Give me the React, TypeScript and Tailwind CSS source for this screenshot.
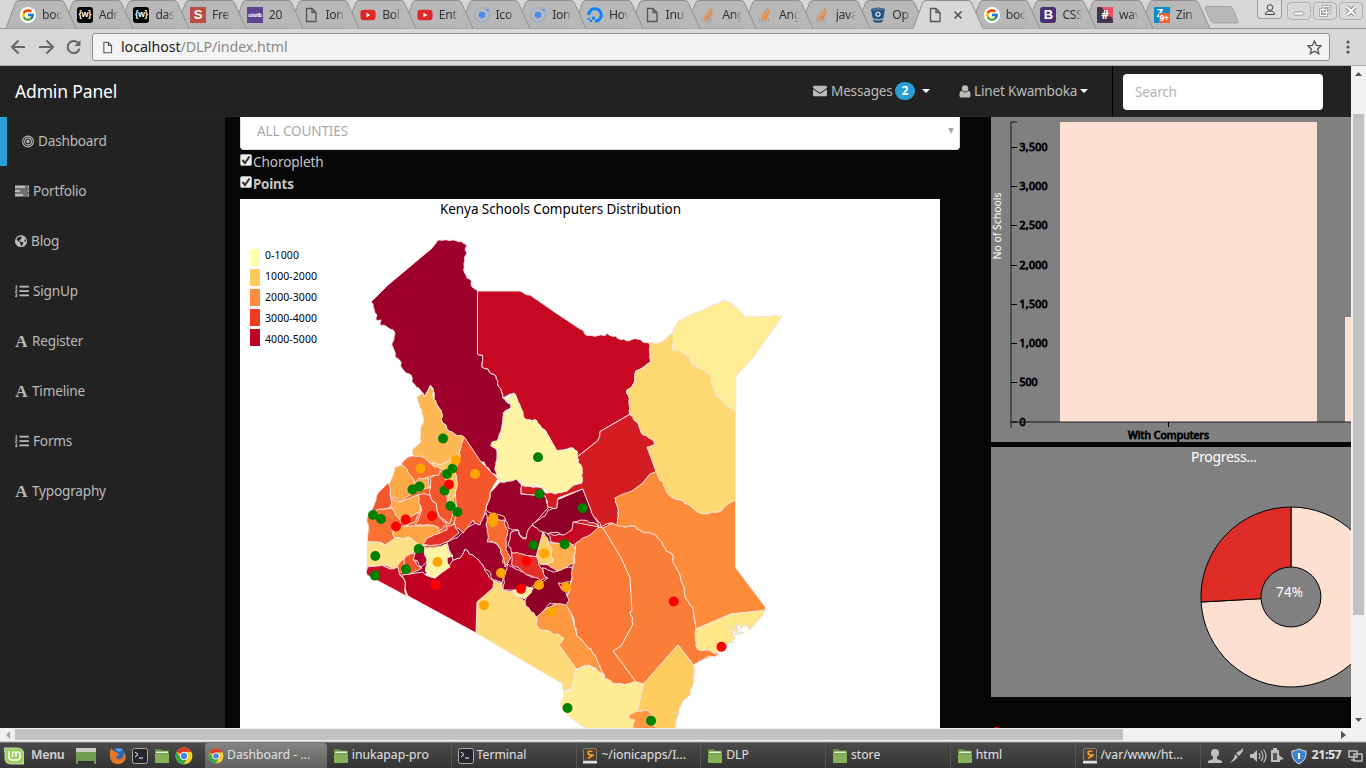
import React from "react";
import { FaGlobeAmericas, FaListOl, FaEnvelope, FaYoutube, FaDigitalOcean } from "react-icons/fa";
import { FcGoogle } from "react-icons/fc";

/* ---------- browser chrome ---------- */

const tabs: [string, string][] = [
  ["google", "boo"], ["w", "Adr"], ["w", "das"], ["s", "Fre"], ["colorlib", "20"], ["page", "Ion"],
  ["youtube", "Bol"], ["youtube", "Ent"], ["ionic", "Ico"], ["ionic", "Ion"], ["ocean", "Hov"], ["page", "Inu"],
  ["stack", "Ang"], ["stack", "Ang"], ["stack", "java"], ["bit", "Op"], ["active", ""], ["google", "boo"],
  ["boot", "CSS"], ["hash", "wav"], ["zim", "Zin"],
];

function PageIcon({ className = "h-4 w-4" }: { className?: string }) {
  return (
    <svg viewBox="0 0 16 16" className={className} fill="none" stroke="#555" strokeWidth="1.3">
      <path d="M3.5 1.5h5.5l4 4v9h-9.500z M9 1.500v4h4" />
    </svg>
  );
}

function Favicon({ kind }: { kind: string }) {
  switch (kind) {
    case "google":
      return <span className="flex h-4 w-4 items-center justify-center rounded-full bg-white"><FcGoogle className="h-3.5 w-3.5" /></span>;
    case "w":
      return <span className="flex h-4 w-4 items-center justify-center rounded-[3px] bg-black font-['Liberation_Sans'] text-[9px] font-bold tracking-[-0.5px] text-white">{"{w}"}</span>;
    case "s":
      return <span className="flex h-4 w-4 items-center justify-center bg-[#bb4c44] font-['Liberation_Sans'] text-[13px] font-bold text-white">S</span>;
    case "colorlib":
      return <span className="flex h-4 w-4 items-center justify-center bg-[#5d4592] text-[4.5px] font-bold tracking-[-0.4px] text-white">colorlib</span>;
    case "youtube":
      return <FaYoutube className="h-4.5 w-4 bg-[linear-gradient(#fff,#fff)] bg-size-[6px_6px] bg-center bg-no-repeat text-[#df2826]" />;
    case "ionic":
      return (
        <svg viewBox="0 0 16 16" className="h-4 w-4">
          <circle cx="8" cy="8" r="7.300" fill="none" stroke="#86a8df" strokeWidth=".9" />
          <circle cx="8" cy="8" r="3.300" fill="#4b8bf5" />
          <circle cx="13.800" cy="3" r="1.200" fill="#4b8bf5" />
        </svg>
      );
    case "ocean":
      return <FaDigitalOcean className="h-4 w-4 text-[#0b82ff]" />;
    case "stack":
      return (
        <svg viewBox="0 0 16 16" className="h-4 w-4" fill="none">
          <path d="M2.500 11v4h9v-4" stroke="#a4a6a9" strokeWidth="1.200" />
          <path d="M4 13h6M4 11l6 .4M4.400 8.600l5.800 1.600M5.500 6l5.200 3M7.500 3.400l4 4.600M10.300 1.300l2 5.700" stroke="#ee8130" strokeWidth="1.200" />
        </svg>
      );
    case "bit":
      return (
        <svg viewBox="0 0 16 16" className="h-4 w-4">
          <path d="M1 2Q8-1 15 2l-1.600 9Q8 13.500 2.600 11z M3 12.500q5 2 10 0l-.6 2.500q-4.400 1.600-8.800 0z" fill="#245186" />
          <circle cx="8" cy="7.200" r="2" fill="none" stroke="#ddd" strokeWidth="1.300" />
          <path d="M3 2.500q5-1.300 10 0" stroke="#aaa" fill="none" strokeWidth=".6" />
        </svg>
      );
    case "boot":
      return <span className="flex h-4 w-4 items-center justify-center rounded-[3px] bg-[#4b2f76] font-['Liberation_Sans'] text-[13px] font-bold text-white">B</span>;
    case "hash":
      return <span className="flex h-4 w-4 items-center justify-center bg-[linear-gradient(45deg,#43354a_62%,#ef5064_63%)] text-[12px] font-bold text-white">#</span>;
    case "zim":
      return (
        <span className="relative flex h-4 w-4 bg-[#0c8acb] pl-[3px] text-[11px] leading-[11px] font-bold text-white">
          Z
          <span className="absolute top-[6px] left-[5px] h-[10px] w-[11px] rounded-[1px] bg-[#f0652b] text-center text-[8px] leading-[10px]">9+</span>
        </span>
      );
    default:
      return <PageIcon />;
  }
}

function Tab({ kind, label, index }: { kind: string; label: string; index: number }) {
  const active = kind === "active";
  return (
    <div className="relative h-7 w-[56.700px] shrink-0" style={{ zIndex: active ? 40 : 30 - index }}>
      <svg className="absolute top-0 left-0 h-[29px] w-[72px]" viewBox="0 0 72 29">
        <path d="M0 28.500L9.500 3Q10.500.5 13 .5H55Q57.500.5 58.500 3L70 28.500" fill={active ? "#d7d7d7" : "#b8b8b8"} stroke="#8f8f8f" />
        {active && <path d="M1 28.500H69.500" stroke="#d7d7d7" strokeWidth="2" />}
      </svg>
      <div className="relative flex h-full items-center gap-[6px] pt-[2px] pl-[14px]">
        <Favicon kind={kind} />
        {active ? (
          <svg viewBox="0 0 10 10" className="ml-[4px] h-[10px] w-[10px] shrink-0" stroke="#555" strokeWidth="1.700"><path d="M1.500 1.500l7 7M8.500 1.500l-7 7" /></svg>
        ) : (
          <span className="w-[20px] shrink-0 overflow-hidden mask-r-from-60% text-[12.2px] tracking-[-0.3px] whitespace-nowrap text-[#333]">{label}</span>
        )}
      </div>
    </div>
  );
}

function WindowButton({ children, className }: { children: React.ReactNode; className: string }) {
  return (
    <div className={className}>
      <svg viewBox="0 0 14 14" className="h-[14px] w-[14px]" fill="none">{children}</svg>
    </div>
  );
}

function Chrome() {
  return (
    <header className="h-[66px] shrink-0 border-b border-[#adadad] bg-[#d7d7d7]">
      <div className="relative flex h-7 pl-[6px]">
        {tabs.map(([k, l], i) => <Tab key={i} kind={k} label={l} index={i} />)}
        <svg className="mt-[6px] ml-[8px] h-[18px] w-[35px] shrink-0" viewBox="0 0 35 18">
          <path d="M3 .5H26Q28 .5 29 3L34 15Q34.500 17 32 17H10Q8 17 7 15L1 3Q.5.500 3 .5z" fill="#b8b8b8" stroke="#a5a5a5" />
        </svg>
        <div className="absolute top-0 right-[3px] flex gap-[2px]">
          <WindowButton className="mr-[3px] flex h-[19px] w-[25px] justify-center rounded-b border border-t-0 border-[#999] bg-[#dedede] pt-[3px]">
            <circle cx="7" cy="4.500" r="2.800" stroke="#444" /><path d="M2.500 11.500q0-3.500 4.500-3.500t4.500 3.500z" stroke="#444" />
          </WindowButton>
          <WindowButton className="mt-[2px] flex h-[18px] w-6 items-center justify-center rounded border border-[#b0b0b0] bg-[#d9d9d9]">
            <rect x="2" y="8" width="10" height="3" rx="1" fill="#fff" stroke="#999" />
          </WindowButton>
          <WindowButton className="mt-[2px] flex h-[18px] w-6 items-center justify-center rounded border border-[#b0b0b0] bg-[#d9d9d9]">
            <path d="M5 2.500h7v6H5z M2.500 5.500h6v6h-6z" stroke="#999" strokeWidth="2.500" /><path d="M5 2.500h7v6H5z M2.500 5.500h6v6h-6z" stroke="#fff" />
          </WindowButton>
          <WindowButton className="mt-[2px] flex h-[18px] w-6 items-center justify-center rounded border border-[#b0b0b0] bg-[#d9d9d9]">
            <path d="M3 3l8 8M11 3l-8 8" stroke="#888" strokeWidth="4" /><path d="M3 3l8 8M11 3l-8 8" stroke="#fff" strokeWidth="2.200" />
          </WindowButton>
        </div>
      </div>
      <div className="flex h-[37px] items-center border-t border-[#8f8f8f] pl-[11px]">
        <svg className="h-4 w-[72px]" viewBox="0 0 72 16" fill="none" stroke="#666" strokeWidth="2">
          <path d="M14 8H2M7.500 1.500L1 8l6.500 6.500" />
          <path d="M28 8h12M35.500 1.500L42 8l-6.500 6.500" />
          <path d="M67.500 4.500A6 6 0 1 0 68.500 9.500" /><path d="M69.500 1v6h-6z" fill="#666" stroke="none" />
        </svg>
        <div className="ml-[9px] flex h-7 w-[1238px] items-center rounded-[3px] border border-[#8f8f8f] bg-[#f3f3f3] pl-2">
          <PageIcon className="h-[13px] w-[13px]" />
          <span className="ml-[7px] w-[1186px] text-[14.2px] tracking-[-0.05px] text-[#8a8a8a]"><span className="text-[#222]">localhost</span>/DLP/index.html</span>
          <svg viewBox="0 0 16 16" className="h-[15px] w-[15px] shrink-0" fill="none" stroke="#555" strokeWidth="1.400"><path d="M8 1l2.100 4.800 5 .4-3.800 3.400 1.200 5L8 11.900l-4.500 2.700 1.200-5L.9 6.200l5-.4z" /></svg>
        </div>
        <svg viewBox="0 0 4 14" className="ml-[16px] h-[14px] w-1" fill="#555"><circle cx="2" cy="2" r="1.600" /><circle cx="2" cy="7" r="1.600" /><circle cx="2" cy="12" r="1.600" /></svg>
      </div>
    </header>
  );
}

/* ---------- sidebar ---------- */

const Bullseye = () => (
  <svg viewBox="0 0 12 12" className="h-[13px] w-3" fill="none" stroke="currentColor" strokeWidth="1.100">
    <circle cx="6" cy="6" r="5.400" /><circle cx="6" cy="6" r="3.400" /><circle cx="6" cy="6" r="1.700" fill="currentColor" stroke="none" />
  </svg>
);
const Tasks = () => (
  <svg viewBox="0 0 14 12" className="h-3 w-[14px]" fill="currentColor">
    <path d="M0 .5h14v3H0zM0 4.500h14v3H0zM0 8.500h14v3H0z" /><path d="M10 1.500h3v1h-3zM5 5.500h8v1H5zM8 9.500h5v1H8z" fill="#222" />
  </svg>
);
const LetterA = () => <span aria-hidden className="w-[13px] text-center font-['Liberation_Serif',serif] text-[17px] leading-none font-bold">A</span>;
const Globe = () => <FaGlobeAmericas className="h-[12.500px] w-[12px]" />;
const List = () => <FaListOl className="h-[14px] w-[14px]" />;

const nav: [React.FC, string][] = [
  [Bullseye, "Dashboard"], [Tasks, "Portfolio"], [Globe, "Blog"], [List, "SignUp"],
  [LetterA, "Register"], [LetterA, "Timeline"], [List, "Forms"], [LetterA, "Typography"],
];

function Sidebar() {
  return (
    <aside className="w-[225px] shrink-0 bg-[#222]">
      {nav.map(([Icon, label], i) => (
        <div key={label} className={i === 0 ? "flex h-[50px] items-center gap-1 border-l-[7px] border-[#2a9fd6] pl-[15px] text-[#bbb]" : "flex h-[50px] items-center gap-1 pl-[15px] text-[#bbb]"}>
          <Icon /><span className="text-[13.6px] tracking-[-0.2px]">{label}</span>
        </div>
      ))}
    </aside>
  );
}

/* ---------- county map ---------- */

const ground: [string, string][] = [
  ["#f4652e", "403,465 430,462 460,460 455,520 447,545 425,550 420,570 402,575 368,570 368,520 379,494 390,483"],
  ["#9b002b", "447,535 480,505 500,482 520,485 548,500 598,527 575,545 571,580 564,605 538,615 523,600 495,590 440,570 400,580 404,566 425,560"],
  ["#fa7a35", "640,640 697,625 720,652 694,664 680,650"],
  ["#d41d22", "585,500 620,515 622,530 575,545 560,520"],
];

const counties: [string, string][] = [
  ["#9e002c", "438,240 454,240 459,242 461,241 467,245 465,250 467,253 464.7,257 464.7,273 471.500,281 471,284 477.500,290.500 477.500,354 482.500,355 482,367 488,369 496,376 498,386 502,393 503,398 511,404 511,408 505,411 502,426 501,440 491,445 497,450 497,476 484,462 480,462 464.500,438 448,430 442.500,423 439,408 434,399 433,388 430,386 427,392 424,397 421,391 416,387 412,382 411,375 406,373 402.500,369 400.500,361 395,357 394,350 391.500,344 394,339 394,331 387,327 380,325 381,320 376,320 377,315 374,309 373,304 371,302 388,285 431,249"],
  ["#c60822", "477.500,291 520,291 530,295 556,313 580,329 586,335 606,335 607,333 609,335 616,336 619,339 627,341 637,339 643,342 648.500,342.500 650.500,362 643,367.500 636,371 635,379 632,387 626.500,390.500 629,402 629.500,414.500 600,431.500 597.500,441 577,457 573,448 557,451 545,430 536,420 524,418 518,402 514,393 510,394 503,398 502,393 498,386 496,376 488,369 482,367 482.500,355 477.500,354"],
  ["#fed872", "648.500,342.500 662,342 672.500,332.500 673,350 687,355 699,369 710,374 712,385 716,395 723,402 735.500,410 735.500,500 725,506 721,511 713,512 707,514 700,513 695,510 685,504 673,498 665,488 656,471.500 647,447 655,444.500 647,436 643,435 639,427 631.500,418 629,411 629,402 626.500,390.500 632,387 635,379 636,371 643,367.500 650.500,362"],
  ["#ffed96", "672.500,332.500 678,321 695,313 725,300 729,302 734,307 740,311 745,317 755,317 775,315 782.500,316 753,358 736,376 736,410 729,406 723,402 716,395 712,385 710,374 699,369 687,355 673,350"],
  ["#d41d22", "629.500,414.500 639,427 643,435 647,436 655,444.500 647,447 656,471.500 650,474 642,484 632,491 622,497 615,498 618,513 618,527 610,523 601,527 593,517 582.700,489 558,498 556.700,509 548,507 545,496 520.700,494 521.700,485 538,487 546,493 567,491 573,485 582,483 582,468 578,463 577,457 597.500,441 600,431.500"],
  ["#fff4a3", "514,393 518,402 523,412 524,418 536,420 545,430 557,451 566,450 573,448 577,451 577,457 578,463 582,468 582,482 575,484 567,491 555,494 547,493 541,486 530,486 522,484 517,480 500,482 497,478 496,462 497,450 491,446 492,442 497,441 502,427 503,413 511,408 511,404 506.700,400"],
  ["#fc8b3a", "656,471.500 665,488 673,498 685,504 695,510 700,513 707,514 713,512 721,511 725,506 735.500,500 735.500,567.500 766,608 764,611 731,614 696,629 692.500,607 687,600 684,587 677,570 673,555 666,551 660,540 650,533 641,531 635,526 618,527 618,513 615,498 632,491 642,484 650,474"],
  ["#fa7e38", "603,528 610,524 618,526 635,526 641,531 650,533 660,540 666,551 673,555 677,570 684,587 687,600 692.500,607 696,629 697.500,649 708,650 720,654 715,657 708,656 700,661 693.500,665 678,645 643.500,684 636,682 613,651 621,646 633,624 630,612 630,578 621,558"],
  ["#fa7a35", "603,528 597,527 588,535 580,539 576,543 575,560 571,575 570,590 565,606 571,613 574,625 577,636 586,645 595,655 601,670 605,679 622,684 636,682 613,651 621,646 633,624 630,612 632,611 630,578 621,558"],
  ["#fecc5c", "678,645 693.500,665 694,680 690,695 683,701 679,711 677,718 674,730 655,730 650,720 649,711 637,711 643.500,684"],
  ["#ffe688", "696,629 731,614 766,610 757,622 750,630 745,625 741,629 738,624 738,632 730,627 736,638 732,641 722,650 718,653 708,650 697.500,649"],
  ["#ffeb92", "576,670 589,664 597,670 605,679 622,684 636,682 643.500,684 637,713 633,730 588,730 568,716 560,706 564,697 564,691 572,690 574,676"],
  ["#fd9840", "637,711 649,711 651,718 658,730 632,730 635,720 629,718 629,715"],
  ["#fddb78", "493,579 502,583 502.700,590 510,592 520,596 523,600 528,608 536.700,617 536,625 551.700,633 564,638 559,645 576,668 571.700,689 564,691 562.700,684 476,633 477,602"],
  ["#c00023", "402,575 405,581 408,596 476,633 477,602 493,588 493,580 483,563 475,557 465,549 460,558 453,560 448,567 435,578 423,572"],
  ["#9e002c", "486,512.700 488,530 490,542 498,545 502,555 503,563 509,565 503,577 502,583 493,580 490,572 483,565 475,557 465,549 460,558 453,560 446.700,542 457,538 467,528 480,522"],
  ["#9b002b", "500,482 516.700,479 521.700,485 520.700,494 545,496 548,508 540,517 528,530 526.700,538 520,535 518,530 508,528 505,518 495,515 486,510 490,493"],
  ["#f4572b", "464.300,437 481,462 498,479 490,493 485,512 480,525 473,520 468,527 463,533 453,527 457,515 455,490 455,473 459,460 459,447"],
  ["#fdb853", "430.700,385 434,399 439,408 442.500,423 448,430 464,437 460,450 457,456 440,465 425,460 415,458 412,450 421,442 423,423 421.700,410 417,397 423,393 425,397 428,391"],
  ["#fec95c", "456,456 460,450 459,460 455,473 456,490 453,500 457,515 450,510 448,500 448,487 446,472 432,463 440,465"],
  ["#f4562b", "430,478 441,471 447,483 447,497 453,510 449,524 438,513 430,495"],
  ["#fb6f31", "401.700,463 408,457 425,458 440,468 439,475 428,477 415,483 408,473"],
  ["#fea848", "401.700,465 408,473 415,483 419,478 428,478 430,488 420,490 410,495 400,502 390.700,498 390.700,480 395,467"],
  ["#f4572b", "388,483 391,498 391,507 380,510 368,517 366.700,523 376,500 378,493"],
  ["#fea848", "391,499 400,502 420,494 420,512 403,520 395,515 391,507"],
  ["#fb7131", "367,517 377,510 391,508 395,515 402,521 392,530 395,538 385,545 378,542 368,542 369,530"],
  ["#f4522a", "418,495 430,495 438,513 447,523 441,530 433,525 415,525 421.700,510"],
  ["#f4522a", "403,520 420,512 415,522 405,526 393,530"],
  ["#fea343", "393,530 405,526 433,525.700 440,532 427,545 419,547 413,541 408,537 395,538"],
  ["#e23126", "440,533 447,530 446,526 455,524 459,533 447,542 435,545 423,545 427,538"],
  ["#a80028", "419,547 423,545 427,562 421,567 412,558"],
  ["#fee187", "367,542 377,542 385,545 395,538 408,537 419,545 413,552 400,562 395,569 390,567 382,565 367,567"],
  ["#c70d25", "367,567 382,565 390,569 398,567 402,577 408,597 367,575"],
  ["#f4522a", "405,557 415,553 413,560 422,568 410,574 401,572 404,565"],
  ["#fff4a3", "425,548 435,548 447,544 453,556 447,558 450,567 435,578 426,572 427,562"],
  ["#fb6a30", "488,518 494,513 499,520 505,520 508,530 506,545 510.700,558 505,567 502,555 498,545 487,542 486,525"],
  ["#a80028", "511,532 518,530 521,537 526,539 528,530 532,525 543,532 541,543 537,557 511.700,553 508,545"],
  ["#c60822", "547,533 563,535 573,522 599,527 590,535 583,538 573,545 562,545 551,542"],
  ["#8f0026", "582.700,489 557,500 557,508 548,510 545,516 532,524 543,532 563,535 572,530 573,522 581,520 599,527 591,510"],
  ["#feae4c", "544,535 552,543 562,545 569,542 575,547 575,563 567,566 565,571 553,568 543,564 553,561"],
  ["#fecf68", "543,532 552,549 552.700,562 540,564 536,557"],
  ["#e62f26", "511.700,553 529,557 536.700,557 540,567 548,577 540,581 523,572 511.700,565"],
  ["#a00028", "508,564 523,572 540,580 536,584 526.700,590 503,590 504,577"],
  ["#8f0026", "541.700,568 553,572 565,568 571.700,567 571,582 558,583 565,591 569,600 565,607 550,603 543,612 536.700,617 525,601 531,590 548,578"],
  ["#fff0a0", "510,592 519,588 533,588 531,593 524,599"],
  ["#fd9840", "536.700,617 547,608 555,604 567,606.700 571,613 577,636 586,645 595,655 605,679 597,670 589,665 576.700,669 559,645 564,638 551.700,633 536,625"],
];

const points: [string, string][] = [
  ["green", "443,438.5 538,457.3 452.5,468.5 447,474 419.5,486.5 412.5,489.5 444.5,490.5 450.5,506 457.5,512 373,515 381,519 539.5,494 582.7,508.3 533.5,545.3 564.7,544.3 375.3,556 418.7,549 406,569.3 375,575.6 567.5,708 651,720.7"],
  ["orange", "456,460 420.5,468.5 475,474 493.3,517.5 493,522 544.3,553.5 437.5,562 501,573 539,585 566,587.3 484,605.3 551.7,612"],
  ["red", "449,484.5 432,516 405.7,519.5 396,526.5 526.5,561 435.3,584.7 521,589 673.7,601.5 721.5,646.7"],
];

/* Splits an edge at its midpoint, again and again, with a small offset that
   depends only on the edge itself, so neighbouring counties share a border. */
function split(x: number, y: number, u: number, v: number, out: string[]) {
  const len = Math.hypot(u - x, v - y);
  if (len <= 4 || len >= 21) return;
  const h = Math.sin((x + u) * 12.9 + (y + v) * 7.3) * Math.min(1.3, len * 0.11);
  const mx = (x + u) / 2 + h;
  const my = (y + v) / 2 - h;
  split(x, y, mx, my, out);
  out.push(mx.toFixed(1) + "," + my.toFixed(1));
  split(mx, my, u, v, out);
}

function roughen(src: string): string {
  const p = src.split(" ").map((s) => s.split(",").map(Number));
  const out: string[] = [];
  p.forEach(([x, y], i) => {
    const [u, v] = p[(i + 1) % p.length];
    out.push(x + "," + y);
    split(x, y, u, v, out);
  });
  return out.join(" ");
}

const legend: [string, string][] = [
  ["#ffffb2", "0-1000"], ["#fecc5c", "1000-2000"], ["#fd8d3c", "2000-3000"], ["#f03b20", "3000-4000"], ["#bd0026", "4000-5000"],
];

function CountyMap() {
  return (
    <svg viewBox="240 199 700 529" className="block h-[529px] w-[700px] bg-white">
      <text x="440" y="214" fontSize="13.500" textLength="241" fill="#000">Kenya Schools Computers Distribution</text>
      {legend.map(([c, label], i) => (
        <g key={label}>
          <rect x="250" y={249 + i * 20} width="10" height="17" fill={c} />
          <text x="265" y={259 + i * 21} fontSize="10.500" textLength={i ? 52 : 34}>{label}</text>
        </g>
      ))}
      {ground.map(([c, pts]) => <polygon key={c} points={pts} fill={c} />)}
      <g stroke="#f3e4e2" strokeWidth="1" strokeLinejoin="round">
        {counties.map(([c, pts], i) => <polygon key={i} points={roughen(pts)} fill={c} />)}
      </g>
      <g fill="none" stroke="#e9dfcf" strokeWidth="1.300">
        <path d="M728 626l5 5-1 4 3 2M738 622l-2 6 4 2M735 635l5-3 4 1M741 627l6-2 3 4M731 643l4-2M694 665v7l-1 6 2 4M672 712l5 2M734 633l8 2" />
      </g>
      {points.map(([c, list]) => list.split(" ").map((s) => {
        const [x, y] = s.split(",");
        return <circle key={s} cx={x} cy={y} r="5" fill={c} />;
      }))}
    </svg>
  );
}

/* ---------- charts ---------- */

const ticks: [number, string][] = [
  [147.5, "3,500"], [186.5, "3,000"], [225.5, "2,500"], [265.5, "2,000"], [304.5, "1,500"], [343.5, "1,000"], [382.5, "500"], [422, "0"],
];

function BarChart() {
  return (
    <svg viewBox="991 117 360 325" className="block h-[325px] w-[360px] bg-[#808080]">
      <rect x="1060" y="122" width="257" height="300" fill="#fde0d2" />
      <rect x="1345" y="317" width="20" height="105" fill="#fde0d2" />
      <path d="M1017 122H1011V428M1011 422H1360" fill="none" stroke="#000" strokeOpacity=".55" strokeWidth="1.500" />
      <path d="M1168.500 422v5" stroke="#000" />
      <g fontSize="10.500" stroke="#000" strokeWidth=".8">
        {ticks.map(([y, t]) => (
          <g key={t}><path d={`M1011 ${y}h6`} strokeWidth="1" /><text x="1019.500" y={y + 3.800} textLength={t.length === 5 ? 28 : t.length === 3 ? 18 : 6.500}>{t}</text></g>
        ))}
        <text x="1128" y="439" textLength="81">With Computers</text>
      </g>
      <text transform="translate(1001 259.500) rotate(-90)" fontSize="10.500" textLength="67" fill="#fff">No of Schools</text>
    </svg>
  );
}

function ProgressChart() {
  return (
    <svg viewBox="991 447 360 250" className="block h-[250px] w-[360px] bg-[#808080]">
      <text x="1191" y="462" fontSize="14" textLength="66" fill="#fff">Progress...</text>
      <g stroke="#000">
        <path d="M1291 507A90 90 0 1 1 1201.100 602L1261 598.700A30 30 0 1 0 1291 567z" fill="#fde0d2" />
        <path d="M1201.100 602A90 90 0 0 1 1291 507V567A30 30 0 0 0 1261 598.700z" fill="#de2d26" />
      </g>
      <text x="1276" y="597" fontSize="13.500" textLength="27" fill="#fff">74%</text>
    </svg>
  );
}

/* ---------- page ---------- */

const Caret = () => <svg viewBox="0 0 8 4" className="h-1 w-2 shrink-0" fill="#fff"><path d="M0 0h8L4 4z" /></svg>;

function Check({ label, bold }: { label: string; bold?: boolean }) {
  return (
    <div className="flex h-[22px] items-center gap-[1px] text-[#c4c4c4]">
      <svg viewBox="0 0 12 12" className="-mt-[5px] h-3 w-3"><rect x=".5" y=".5" width="11" height="11" rx="1.500" fill="#eee" stroke="#aaa" /><path d="M2.500 6l2.500 3 4.500-6.500" fill="none" stroke="#333" strokeWidth="2" /></svg>
      <span className={bold ? "text-[13.4px] font-bold tracking-[-0.2px]" : "text-[13.6px] tracking-[-0.1px]"}>{label}</span>
    </div>
  );
}

function Page() {
  return (
    <div className="flex h-[662px] w-[1351px] flex-col bg-[#060606]">
      <nav className="z-10 flex h-[51px] shrink-0 items-center border-b border-[#282828] bg-[#222] pl-[15px] text-[13.6px] text-[#bbb]">
        <span className="w-[798px] shrink-0 text-[17.5px] tracking-[-0.15px] text-white">Admin Panel</span>
        <FaEnvelope className="h-[14px] w-[14px] shrink-0" />
        <span className="ml-[4px] w-[62px] shrink-0 tracking-[-0.2px]">Messages</span>
        <span className="ml-[2px] flex h-[18px] w-[20px] shrink-0 items-center justify-center rounded-full bg-[#2a9fd6] text-xs font-bold text-white">2</span>
        <span className="ml-[7px]"><Caret /></span>
        <svg viewBox="0 0 12 13" className="ml-[29px] h-[13px] w-3 shrink-0" fill="#bbb"><circle cx="6" cy="3.400" r="3.200" /><path d="M2.600 5.800Q0 6.500.5 11Q.7 12.500 2.500 12.500h7q1.800 0 2-1.500Q12 6.500 9.400 5.800 6 9 2.600 5.800z" /></svg>
        <span className="ml-[3px] w-[106px] shrink-0 tracking-[-0.2px] whitespace-nowrap">Linet Kwamboka</span>
        <Caret />
        <div className="ml-6 flex h-full items-center border-l border-black pt-[2px] pl-[10px]">
          <div className="flex h-9 w-[200px] items-center rounded bg-white pl-3 tracking-[-0.2px] text-[#b5b5b5]">Search</div>
        </div>
      </nav>
      <div className="-mt-px flex min-h-0 flex-1">
        <Sidebar />
        <main className="flex flex-1 overflow-hidden pt-px pl-[15px]">
          <div className="w-[751px] shrink-0">
            <div className="flex h-[33px] w-[720px] items-center justify-between rounded-b border border-t-0 border-[#ddd] bg-white pr-[5px] pb-1 pl-4 text-[13.5px] text-[#aaa]">
              <span className="tracking-[-0.1px]">ALL COUNTIES</span>
              <svg viewBox="0 0 6 6" className="h-1.5 w-1.5" fill="#aaa"><path d="M0 0h6L3 6z" /></svg>
            </div>
            <div className="mt-px mb-[4px]"><Check label="Choropleth" /><Check label="Points" bold /></div>
            <CountyMap />
          </div>
          <div className="flex w-[360px] shrink-0 flex-col gap-[5px]">
            <BarChart />
            <ProgressChart />
            <svg viewBox="0 0 12 31" className="-mt-[5px] h-[31px] w-3"><circle cx="5.500" cy="35" r="5" fill="red" /></svg>
          </div>
        </main>
      </div>
    </div>
  );
}

function VerticalBar() {
  return (
    <div className="flex h-full w-[15px] flex-col items-center bg-[#f1f1f1] pt-[6px]">
      <svg viewBox="0 0 7 4" className="h-1 w-[7px]" fill="#505050"><path d="M0 4h7L3.500 0z" /></svg>
      <div className="mt-[38px] h-[501px] w-[11px] bg-[#c1c1c1]" />
      <svg viewBox="0 0 7 4" className="mt-[103px] h-1 w-[7px]" fill="#505050"><path d="M0 0h7L3.500 4z" /></svg>
    </div>
  );
}

/* ---------- desktop panel ---------- */

const Folder = () => (
  <svg viewBox="0 0 16 16" className="h-4 w-4 shrink-0"><path d="M1 1h6l1 1.500h7V15H1z" fill="#5f8a38" /><path d="M1 5.500h14V15H1z" fill="#86b158" /><path d="M2 3.500h12v1.500H2z" fill="#e6eedc" /></svg>
);
const Terminal = () => (
  <svg viewBox="0 0 16 16" className="h-4 w-4 shrink-0"><rect x=".5" y=".5" width="15" height="15" rx="2" fill="#25252f" stroke="#aaa" /><path d="M3 4l3 2.500L3 9M7 10h4" stroke="#fff" fill="none" /></svg>
);
const Sublime = () => (
  <svg viewBox="0 0 16 16" className="h-4 w-4 shrink-0"><rect x="1.500" y=".5" width="13" height="12.500" rx="1.500" fill="#4d4037" stroke="#8a8178" /><path d="M1 13h14v2.500H1z" fill="#ddd" /><path d="M10.500 3.500Q5.500 2.500 6 5t4 2-4 3.200" stroke="#f6a030" strokeWidth="1.600" fill="none" /></svg>
);
const ChromeLogo = ({ className = "h-4 w-4 shrink-0" }: { className?: string }) => (
  <svg viewBox="0 0 16 16" className={className}>
    <circle cx="8" cy="8" r="7.500" fill="#f7cf2c" /><path d="M8 8L1.500 4.250A7.500 7.500 0 0 1 14.500 4.250L8 4.500z" fill="#df3b2c" /><path d="M1.500 4.250A7.500 7.500 0 0 0 8 15.500L11 9.500 8 11 5 9.500z" fill="#3da648" />
    <circle cx="8" cy="8" r="3.600" fill="#fff" /><circle cx="8" cy="8" r="2.800" fill="#4587e8" />
  </svg>
);

const windows: [React.FC, string][] = [
  [ChromeLogo, "Dashboard - ..."], [Folder, "inukapap-pro"], [Terminal, "Terminal"], [Sublime, "~/ionicapps/I..."],
  [Folder, "DLP"], [Folder, "store"], [Folder, "html"], [Sublime, "/var/www/ht..."],
];

function Taskbar() {
  return (
    <footer className="flex h-[26px] shrink-0 items-center border-t border-[#777] bg-linear-to-b from-[#4a4a4a] to-[#343434] pl-[4px] text-[12.2px] text-[#e2e2e2]">
      <svg viewBox="0 0 20 18" className="h-[18px] w-5 shrink-0"><path d="M0 1h13q7 0 7 7v9H7q-6 0-6-6V4H0z" fill="#9bcf5f" stroke="#e5eedc" strokeWidth=".8" /><path d="M5 4v6q0 3 3 3h5q3 0 3-3V7q0-2-2-2t-2 2v3M12 7q0-2-1.800-2T8.500 7v3" stroke="#fff" strokeWidth="1.500" fill="none" /></svg>
      <span className="ml-[7px] w-[45px] shrink-0 font-bold tracking-[-0.3px] text-[#c9c9c9]">Menu</span>
      <svg viewBox="0 0 20 16" className="h-4 w-5 shrink-0"><path d="M0 0h20v16H0z" fill="#729d50" /><path d="M0 0h20v4H0z" fill="#c9cec4" /><path d="M2 13h16v3H2z" fill="#333" /></svg>
      <svg viewBox="0 0 18 18" className="ml-[13px] h-[18px] w-[18px] shrink-0"><circle cx="9" cy="9" r="8" fill="#2869ad" /><path d="M1 5q0-3 2-4 0 3 4 4l3 2-3 3q1 3 5 2 4-2 2-7 4 4 2 8-3 5-8 4Q1 16 1 9z" fill="#e87722" /><path d="M6 2q5-2 8 1l-4 2z" fill="#5da2de" /></svg>
      <div className="ml-[5px] flex items-center gap-[6px]"><Terminal /><Folder /><ChromeLogo className="-ml-px h-[18px] w-[18px] shrink-0" /></div>
      <div className="ml-[12px] flex h-full shrink-0 gap-[2.800px]">
        {windows.map(([Icon, label], i) => (
          <div key={label} className={i === 0 ? "flex h-full w-[122px] items-center gap-[3px] rounded-t bg-linear-to-b from-[#858585] to-[#606060] pl-[3px]" : "flex h-full w-[122px] items-center gap-[3px] border-r border-[#555] bg-linear-to-b from-[#4b4b4b] to-[#333] pl-[3px]"}>
            <Icon /><span className="whitespace-nowrap">{label}</span>
          </div>
        ))}
      </div>
      <svg viewBox="0 0 100 18" className="ml-[7px] h-[18px] w-[100px] shrink-0" fill="#bebebe">
        <circle cx="7" cy="6" r="4" /><path d="M5 8h4v4l5 2v2H0v-2l5-2z" />
        <path d="M22 16l4-5 1-4 3 3-3 3zM28 6l5-3 2-2v3l-4 5z" />
        <path d="M42 7h3l4-4v12l-4-4h-3z" /><path d="M51 6q2 3 0 6M53 4q4 5 0 10M55.500 2.500q5 6.500 0 13" fill="none" stroke="#bebebe" strokeWidth="1.200" />
        <path d="M63 3h2V1h4v2h2v5l5 4-4 1v2h-9z" /><path d="M65 6h4v7h-4z" fill="#555" />
        <path d="M91 2q4 2 7 2 1 9-7 13-8-4-7-13 3 0 7-2z" fill="#3a83cf" stroke="#ddd" /><path d="M91 6v6" stroke="#fff" strokeWidth="2" />
      </svg>
      <span className="ml-[4px] w-[34px] shrink-0 text-[12.5px] font-bold tracking-[-0.5px]">21:57</span>
      <svg viewBox="0 0 15 14" className="ml-[2px] h-[14px] w-[15px] shrink-0" fill="#3c3c3c" stroke="#bebebe" strokeWidth="1.500"><path d="M6 5h8v7H6zM1 2h8v6H1zM3 11h4" /></svg>
    </footer>
  );
}

export default function App() {
  return (
    <div className="flex h-[768px] w-[1366px] flex-col overflow-hidden bg-[#d7d7d7] font-['Noto_Sans','Open_Sans',sans-serif]">
      <Chrome />
      <div className="flex h-[662px] shrink-0"><Page /><VerticalBar /></div>
      <div className="flex h-[14px] shrink-0 items-center border-b border-[#d0d0d0] bg-[#f1f1f1]">
        <svg viewBox="0 0 15 8" className="h-2 w-[15px]" fill="#a3a3a3"><path d="M10 0v8L6 4z" /></svg>
        <div className="h-[11px] w-[1108px] bg-[#c1c1c1]" />
        <svg viewBox="0 0 5 8" className="ml-[218px] h-2 w-[5px]" fill="#505050"><path d="M0 0v8l5-4z" /></svg>
      </div>
      <Taskbar />
    </div>
  );
}
